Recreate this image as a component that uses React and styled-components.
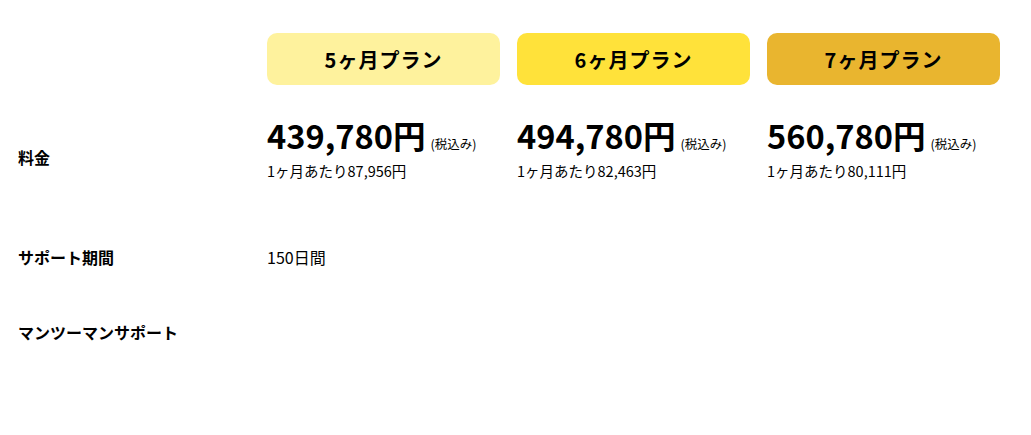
import styled, { createGlobalStyle } from 'styled-components';

const GlobalStyle = createGlobalStyle`
  body {
    margin: 0;
    background: #fff;
    color: #000;
    font-family: "Noto Sans CJK JP", "Noto Sans", sans-serif;
  }
`;

const Table = styled.div`
  padding: 33px 0 0 18px;
  width: 1013px;
`;

// 行: ラベル列 + プラン3列
const Row = styled.div`
  display: grid;
  grid-template-columns: 232px repeat(3, 233px);
  column-gap: 17px;
  align-items: center;
  height: ${(p) => p.$h}px;
`;

const Label = styled.div`
  font-size: 16px;
  font-weight: 700;
`;

const PlanHead = styled.div`
  height: 52px;
  border-radius: 10px;
  background: ${(p) => p.$bg};
  display: flex;
  align-items: center;
  justify-content: center;
  font-size: 20px;
  font-weight: 700;
  letter-spacing: 1px;
`;

const Price = styled.div`
  align-self: start;
  margin-top: 31px;
  display: flex;
  flex-direction: column;
`;

const Amount = styled.div`
  display: flex;
  align-items: baseline;
  gap: 5px;
  font-size: 32.6px;
  font-weight: 700;
  line-height: 38px;
`;

const Tax = styled.span`
  font-size: 12.5px;
  font-weight: 400;
`;

const Monthly = styled.div`
  font-size: 14.5px;
  line-height: 20px;
  margin-top: -2px;
`;

const Cell = styled.div`
  font-size: 16px;
`;

const plans = [
  { name: '5ヶ月プラン', bg: '#fef29d', price: '439,780円', month: '87,956円' },
  { name: '6ヶ月プラン', bg: '#ffe23a', price: '494,780円', month: '82,463円' },
  { name: '7ヶ月プラン', bg: '#e9b52f', price: '560,780円', month: '80,111円' },
];

const App = () => (
  <>
    <GlobalStyle />
    <Table>
      <Row $h={52}>
        <div />
        {plans.map((p) => (
          <PlanHead key={p.name} $bg={p.bg}>
            {p.name}
          </PlanHead>
        ))}
      </Row>
      <Row $h={144}>
        <Label>料金</Label>
        {plans.map((p) => (
          <Price key={p.name}>
            <Amount>
              {p.price}
              <Tax>(税込み)</Tax>
            </Amount>
            <Monthly>1ヶ月あたり{p.month}</Monthly>
          </Price>
        ))}
      </Row>
      <Row $h={56}>
        <Label>サポート期間</Label>
        <Cell>150日間</Cell>
      </Row>
      <Row $h={94}>
        <Label>マンツーマンサポート</Label>
      </Row>
    </Table>
  </>
);

export default App;
